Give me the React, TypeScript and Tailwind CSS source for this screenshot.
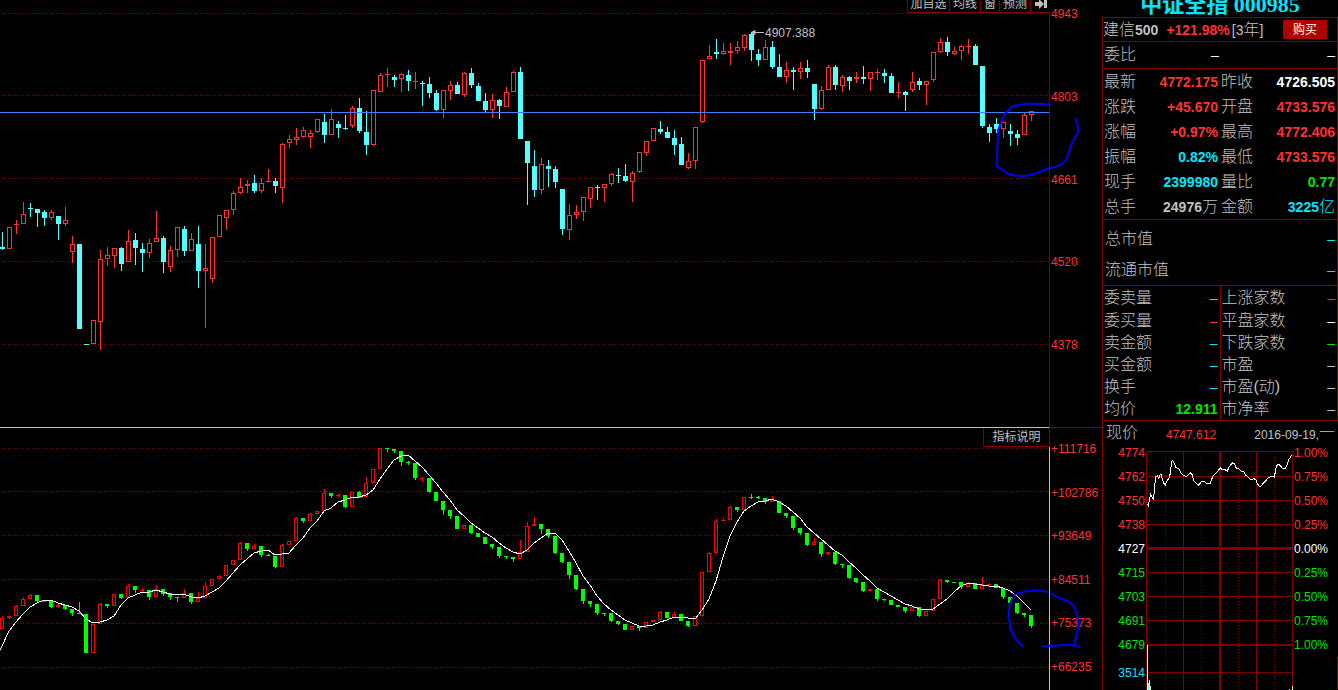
import React from "react";

// [rising, high, body top, body bottom, low]
type Bar = [number, number, number, number, number];

const STEP = 7;

const priceBars: Bar[] = [
  [0, 232, 247, 249, 250], [1, 227, 227, 249, 249], [1, 220, 224, 225, 234], [1, 202, 214, 224, 224],
  [0, 203, 208, 209, 217], [0, 209, 209, 213, 227], [0, 210, 212, 218, 226], [1, 210, 212, 218, 220],
  [0, 216, 216, 224, 240], [1, 207, 220, 224, 226], [1, 236, 244, 252, 263], [0, 244, 244, 329, 329],
  [0, 344, 344, 345, 345], [1, 320, 320, 344, 344], [1, 250, 259, 322, 350], [1, 247, 255, 259, 266],
  [1, 248, 248, 256, 268], [0, 247, 248, 264, 271], [1, 230, 241, 262, 262], [0, 233, 240, 248, 265],
  [0, 243, 249, 253, 272], [1, 239, 243, 253, 258], [1, 211, 238, 242, 242], [0, 236, 238, 262, 273],
  [1, 246, 250, 267, 272], [1, 227, 227, 250, 257], [0, 226, 229, 251, 256], [1, 233, 239, 251, 251],
  [0, 226, 244, 271, 288], [1, 244, 268, 271, 328], [1, 237, 237, 279, 283], [1, 215, 215, 237, 237],
  [1, 210, 210, 218, 230], [1, 191, 193, 210, 215], [1, 178, 187, 193, 194], [1, 180, 184, 186, 193],
  [0, 175, 183, 191, 193], [1, 178, 183, 191, 193], [1, 169, 181, 182, 182], [0, 178, 181, 186, 193],
  [1, 143, 144, 188, 203], [1, 135, 139, 143, 148], [1, 128, 137, 140, 145], [1, 127, 130, 137, 138],
  [1, 130, 133, 137, 148], [1, 119, 119, 132, 133], [0, 114, 122, 135, 143], [1, 109, 119, 135, 135],
  [0, 121, 124, 128, 138], [0, 115, 128, 129, 130], [1, 106, 108, 126, 128], [0, 98, 108, 131, 133],
  [0, 111, 132, 145, 155], [1, 90, 90, 145, 146], [1, 73, 75, 92, 92], [1, 68, 74, 75, 87],
  [0, 75, 77, 80, 87], [1, 73, 74, 79, 92], [0, 70, 75, 81, 91], [1, 72, 81, 82, 89],
  [0, 81, 83, 84, 106], [0, 77, 84, 93, 98], [0, 90, 93, 110, 111], [1, 90, 90, 110, 118],
  [1, 81, 85, 91, 100], [0, 82, 85, 94, 94], [1, 72, 73, 95, 97], [0, 68, 73, 85, 88],
  [0, 83, 86, 101, 101], [0, 93, 101, 110, 112], [1, 94, 100, 110, 118], [0, 99, 100, 106, 119],
  [1, 87, 92, 107, 107], [1, 71, 72, 92, 92], [0, 67, 72, 139, 139], [0, 141, 141, 163, 205],
  [0, 150, 166, 190, 197], [1, 158, 164, 190, 194], [0, 160, 166, 169, 187], [0, 166, 169, 182, 188],
  [0, 189, 189, 229, 235], [1, 204, 215, 230, 240], [1, 205, 212, 215, 219], [1, 197, 197, 212, 221],
  [1, 187, 187, 199, 208], [0, 185, 187, 188, 200], [1, 184, 184, 188, 202], [1, 173, 174, 184, 186],
  [0, 168, 175, 176, 183], [0, 164, 176, 181, 182], [1, 171, 173, 182, 202], [1, 152, 152, 172, 173],
  [1, 141, 141, 153, 156], [1, 128, 128, 141, 141], [0, 121, 129, 132, 134], [0, 127, 132, 138, 138],
  [0, 130, 138, 145, 155], [0, 137, 144, 165, 165], [1, 153, 161, 168, 169], [1, 127, 127, 161, 169],
  [1, 60, 60, 122, 123], [1, 45, 56, 59, 59], [0, 39, 52, 54, 59], [1, 43, 51, 54, 55],
  [1, 43, 51, 53, 65], [1, 41, 47, 51, 54], [1, 34, 35, 48, 51], [0, 32, 34, 50, 61],
  [0, 49, 54, 60, 66], [1, 40, 47, 60, 60], [0, 41, 47, 67, 69], [0, 54, 67, 77, 77],
  [1, 62, 70, 77, 83], [0, 67, 70, 72, 90], [1, 62, 68, 72, 79], [0, 60, 68, 72, 78],
  [0, 84, 84, 109, 120], [1, 86, 90, 109, 110], [1, 65, 67, 90, 90], [0, 65, 67, 85, 90],
  [1, 75, 77, 86, 92], [0, 76, 77, 81, 90], [1, 72, 77, 79, 83], [0, 66, 77, 79, 84],
  [1, 72, 72, 79, 91], [1, 69, 72, 73, 80], [0, 69, 73, 76, 83], [0, 73, 76, 93, 93],
  [1, 82, 92, 93, 98], [0, 91, 92, 95, 111], [1, 72, 82, 90, 92], [0, 78, 81, 85, 90],
  [1, 81, 81, 85, 105], [1, 52, 52, 80, 82], [1, 38, 42, 52, 53], [0, 37, 42, 52, 56],
  [1, 47, 51, 54, 55], [1, 45, 46, 51, 60], [1, 39, 46, 47, 54], [0, 44, 46, 65, 65],
  [0, 66, 66, 126, 128], [0, 124, 127, 133, 142], [0, 118, 124, 129, 133], [1, 122, 122, 129, 138],
  [0, 124, 131, 134, 146], [0, 130, 134, 138, 145], [1, 113, 115, 135, 135], [1, 111, 111, 115, 121],
];

const indicatorBars: Bar[] = [
  [1, 616, 618, 629, 629], [1, 616, 616, 618, 619], [1, 605, 606, 616, 616], [1, 597, 599, 606, 606],
  [1, 594, 595, 599, 599], [0, 595, 595, 601, 603], [1, 600, 600, 602, 602], [0, 601, 601, 607, 608],
  [1, 604, 605, 607, 608], [0, 605, 605, 609, 610], [0, 609, 609, 613, 616], [0, 602, 613, 614, 614],
  [0, 614, 614, 653, 653], [1, 624, 624, 653, 653], [1, 603, 604, 624, 624], [0, 604, 604, 606, 608],
  [1, 594, 594, 606, 606], [0, 594, 594, 598, 599], [1, 584, 586, 598, 598], [0, 586, 586, 590, 593],
  [1, 588, 590, 591, 593], [0, 590, 590, 597, 600], [1, 585, 589, 597, 597], [0, 589, 589, 594, 596],
  [0, 593, 593, 597, 600], [0, 597, 597, 598, 602], [1, 589, 593, 598, 598], [0, 593, 593, 602, 604],
  [1, 592, 598, 602, 602], [1, 582, 586, 598, 598], [1, 579, 579, 586, 586], [1, 575, 576, 579, 579],
  [1, 565, 565, 576, 576], [1, 560, 560, 565, 565], [1, 542, 543, 560, 560], [0, 543, 543, 549, 551],
  [1, 544, 546, 549, 549], [0, 546, 546, 555, 557], [0, 554, 555, 556, 556], [0, 556, 556, 567, 568],
  [1, 544, 545, 567, 567], [1, 541, 541, 545, 545], [1, 517, 518, 541, 541], [0, 518, 518, 521, 523],
  [1, 513, 514, 521, 521], [1, 511, 511, 514, 514], [1, 489, 493, 511, 511], [0, 493, 493, 496, 498],
  [1, 494, 495, 496, 497], [0, 495, 495, 507, 508], [1, 492, 492, 507, 507], [0, 491, 492, 498, 498],
  [1, 477, 483, 497, 497], [1, 469, 469, 483, 483], [1, 448, 448, 469, 469], [0, 448, 448, 449, 452],
  [0, 449, 449, 451, 453], [0, 451, 451, 462, 466], [0, 461, 462, 463, 465], [0, 463, 463, 478, 480],
  [1, 477, 478, 479, 482], [0, 478, 478, 492, 493], [0, 492, 492, 501, 501], [0, 501, 501, 510, 515],
  [0, 510, 510, 516, 519], [0, 516, 516, 529, 529], [1, 525, 525, 529, 529], [0, 525, 525, 533, 534],
  [0, 533, 533, 537, 537], [0, 537, 537, 544, 544], [0, 544, 544, 547, 549], [0, 547, 547, 556, 558],
  [0, 556, 556, 557, 559], [0, 557, 557, 559, 562], [1, 540, 552, 559, 559], [1, 522, 526, 552, 552],
  [1, 517, 524, 526, 526], [0, 524, 524, 529, 534], [0, 529, 529, 536, 538], [0, 536, 536, 553, 554],
  [0, 553, 553, 562, 563], [0, 562, 562, 575, 579], [0, 575, 575, 589, 590], [0, 589, 589, 601, 604],
  [0, 601, 601, 604, 607], [0, 604, 604, 613, 615], [0, 613, 613, 614, 616], [0, 613, 613, 621, 622],
  [0, 621, 621, 624, 625], [0, 624, 624, 630, 630], [1, 626, 626, 630, 630], [0, 626, 626, 628, 631],
  [1, 622, 622, 628, 628], [1, 620, 620, 622, 622], [1, 611, 612, 620, 620], [0, 612, 612, 618, 618],
  [1, 612, 614, 618, 618], [0, 614, 614, 621, 621], [0, 621, 621, 626, 627], [1, 616, 616, 626, 626],
  [1, 572, 572, 616, 616], [1, 552, 553, 572, 572], [1, 519, 521, 553, 553], [1, 518, 520, 521, 521],
  [1, 506, 507, 520, 520], [0, 507, 507, 510, 512], [1, 497, 497, 510, 510], [0, 494, 497, 498, 499],
  [0, 496, 497, 498, 499], [0, 498, 498, 502, 504], [1, 496, 499, 502, 502], [0, 501, 501, 513, 513],
  [0, 513, 513, 516, 518], [0, 516, 516, 528, 530], [0, 528, 528, 533, 535], [0, 533, 533, 545, 546],
  [1, 538, 542, 545, 545], [0, 542, 542, 554, 557], [1, 552, 552, 554, 555], [0, 552, 552, 564, 565],
  [0, 564, 564, 565, 568], [0, 565, 565, 578, 579], [0, 578, 578, 582, 583], [0, 582, 582, 591, 592],
  [1, 589, 589, 591, 591], [0, 589, 589, 599, 601], [0, 599, 599, 600, 601], [0, 600, 600, 605, 605],
  [0, 605, 605, 607, 607], [0, 607, 607, 611, 613], [1, 607, 607, 611, 611], [0, 607, 607, 616, 617],
  [1, 611, 611, 616, 616], [1, 599, 599, 611, 611], [1, 579, 580, 599, 599], [0, 580, 580, 582, 583],
  [0, 582, 582, 583, 583], [0, 582, 582, 587, 589], [1, 582, 583, 587, 587], [0, 583, 583, 589, 589],
  [1, 577, 584, 589, 589], [1, 583, 584, 585, 585], [0, 584, 584, 588, 588], [0, 588, 588, 597, 599],
  [0, 597, 597, 603, 603], [0, 603, 603, 613, 614], [0, 613, 613, 615, 617], [0, 615, 615, 626, 628],
];

const movingAverage = [
  646, 631, 622, 614, 607, 603, 600, 600, 603, 605, 607, 611, 619, 623, 622, 620, 616, 605, 598, 595,
  592, 592, 590, 592, 594, 595, 594, 597, 598, 596, 592, 588, 581, 573, 565, 559, 553, 551, 550, 555,
  554, 553, 545, 538, 528, 521, 511, 508, 502, 500, 497, 497, 495, 490, 479, 469, 460, 456, 455, 461,
  467, 475, 483, 492, 500, 510, 516, 523, 528, 533, 537, 543, 548, 552, 554, 550, 543, 538, 533, 533,
  540, 551, 563, 576, 585, 596, 604, 610, 615, 620, 623, 626, 626, 625, 622, 620, 617, 617, 618, 619,
  610, 599, 581, 557, 536, 522, 511, 506, 502, 501, 499, 502, 506, 512, 518, 527, 533, 539, 545, 551,
  555, 562, 568, 575, 581, 588, 592, 596, 600, 604, 606, 609, 610, 609, 604, 599, 592, 586, 583, 584,
  585, 586, 586, 588, 591, 596, 603, 610,
];

const intraday =
  "142,252 145,257 148,240 152,224 156,232 160,236 163,215 165,190 167,170 172,167 176,175 180,165 184,163 187,178 191,190 196,195 200,184 207,175 211,160 215,125 218,121 223,130 227,142 236,146 242,158 248,165 260,170 271,158 277,165 281,182 289,190 297,196 303,186 313,184 318,189 331,189 338,170 346,160 355,152 361,142 366,150 375,149 382,153 388,140 398,128 404,132 407,143 415,146 423,153 431,154 437,166 445,171 453,180 460,176 467,178 471,189 480,202 488,192 496,184 503,174 514,170 523,171 529,140 534,132 542,138 547,146 556,145 562,132 567,118 576,104";

const RED = "text-[#ff3232]";
const CYAN = "text-[#00e6ff]";
const GREEN = "text-[#00e600]";
const WHITE = "text-white";
const GRAY = "text-[#c0c0c0]";

type Cell = { label: string; value: string; unit?: string; color: string };

const quotes: [Cell, Cell][] = [
  [{ label: "最新", value: "4772.175", color: RED }, { label: "昨收", value: "4726.505", color: WHITE }],
  [{ label: "涨跌", value: "+45.670", color: RED }, { label: "开盘", value: "4733.576", color: RED }],
  [{ label: "涨幅", value: "+0.97%", color: RED }, { label: "最高", value: "4772.406", color: RED }],
  [{ label: "振幅", value: "0.82%", color: CYAN }, { label: "最低", value: "4733.576", color: RED }],
  [{ label: "现手", value: "2399980", color: CYAN }, { label: "量比", value: "0.77", color: GREEN }],
  [
    { label: "总手", value: "24976", unit: "万", color: GRAY },
    { label: "金额", value: "3225", unit: "亿", color: CYAN },
  ],
];

const breadth: [Cell, Cell][] = [
  [{ label: "委卖量", value: "–", color: CYAN }, { label: "上涨家数", value: "–", color: RED }],
  [{ label: "委买量", value: "–", color: RED }, { label: "平盘家数", value: "–", color: WHITE }],
  [{ label: "卖金额", value: "–", color: CYAN }, { label: "下跌家数", value: "–", color: GREEN }],
  [{ label: "买金额", value: "–", color: CYAN }, { label: "市盈", value: "–", color: GRAY }],
  [{ label: "换手", value: "–", color: CYAN }, { label: "市盈(动)", value: "–", color: GRAY }],
  [{ label: "均价", value: "12.911", color: GREEN }, { label: "市净率", value: "–", color: GRAY }],
];

const miniLeft = [
  ["4774", RED], ["4762", RED], ["4750", RED], ["4738", RED], ["4727", WHITE],
  ["4715", GREEN], ["4703", GREEN], ["4691", GREEN], ["4679", GREEN],
];

const miniRight = [
  ["1.00%", RED], ["0.75%", RED], ["0.50%", RED], ["0.25%", RED], ["0.00%", WHITE],
  ["0.25%", GREEN], ["0.50%", GREEN], ["0.75%", GREEN], ["1.00%", GREEN],
];

function Candles({ bars, width, up, down }: { bars: Bar[]; width: number; up: string; down: string }) {
  return (
    <g shapeRendering="crispEdges">
      {bars.map(([rising, high, top, bottom, low], i) => {
        const x = 2 + i * STEP;
        const color = rising ? up : down;
        const hollow = rising === 1 && bottom - top > 2;
        return (
          <g key={i}>
            <rect x={x} y={high} width={1} height={low - high} fill={color} />
            <rect x={x - 2} y={top} width={width} height={bottom - top} fill={color} />
            {hollow && (
              <rect x={x - 1} y={top + 1} width={width - 2} height={bottom - top - 2} fill="#000" />
            )}
          </g>
        );
      })}
    </g>
  );
}

function GridLines({ rows }: { rows: number[] }) {
  return (
    <g stroke="#800000" strokeDasharray="1 2" shapeRendering="crispEdges">
      {rows.map((y) => (
        <line key={y} x1="2" x2="1049" y1={y + 0.5} y2={y + 0.5} />
      ))}
    </g>
  );
}

function PairTable({ rows, split }: { rows: [Cell, Cell][]; split?: boolean }) {
  const labelCol = split ? "w-[68px]" : "w-[36px]";
  const rowHeight = split ? "h-[22px] first:h-6" : "h-[25px]";
  return (
    <table className="w-full table-fixed border-collapse leading-none whitespace-nowrap">
      <colgroup>
        <col className={labelCol} />
        <col />
        <col className={labelCol} />
        <col />
      </colgroup>
      <tbody>
        {rows.map((pair) => (
          <tr key={pair[0].label} className={rowHeight}>
            {pair.map((cell, i) => (
              <React.Fragment key={cell.label}>
                <th
                  scope="row"
                  className={`p-0 pl-px text-left text-base leading-none font-light ${
                    split && i === 1 ? "border-l border-[#800000]" : ""
                  }`}
                >
                  {cell.label}
                </th>
                <td
                  className={`p-0 pr-0.5 text-right text-sm leading-none ${
                    cell.value === "–" ? "font-normal" : "font-bold"
                  } ${cell.color}`}
                >
                  {cell.value}
                  {cell.unit && <span className="text-base leading-none font-light">{cell.unit}</span>}
                </td>
              </React.Fragment>
            ))}
          </tr>
        ))}
      </tbody>
    </table>
  );
}

function PriceChart() {
  return (
    <section className="relative flex">
      <div className="min-w-0 flex-1 border-b border-[#c0c0c0]">
        <svg viewBox="0 0 1049 427" className="block h-auto w-full">
          <GridLines rows={[13, 95, 178, 261, 344]} />
          <Candles bars={priceBars} width={5} up="#ff3232" down="#54ffff" />
          <rect y="112" width="1049" height="1" fill="#4080ff" />
          <path d="M751 32.5h13M751 32.5l4-2v4z" stroke="#c0c0c0" fill="#c0c0c0" />
          <text x="765" y="37" fontSize="12" fill="#c0c0c0">
            4907.388
          </text>
        </svg>
      </div>
      <div className="flex w-[53px] flex-col justify-between border-b border-l border-[#800000] pt-[7px] pb-[75px] pl-px text-xs leading-[14px] text-[#ff3232]">
        <span>4943</span>
        <span>4803</span>
        <span>4661</span>
        <span>4520</span>
        <span>4378</span>
      </div>

      {/* Toolbar, tucked under the window's top edge */}
      <div className="absolute top-0 right-[52px] flex h-[13px] items-end border-b border-l border-[#800000] bg-black text-xs leading-4 whitespace-nowrap">
        <button className="h-4 w-[42px] border-r border-[#800000]">加自选</button>
        <button className="h-4 w-[31px] border-r border-[#800000]">均线</button>
        <button className="h-4 w-[19px] border-r border-[#800000]">窗</button>
        <button className="h-4 w-[31px] border-r border-[#800000]">预测</button>
        <button className="flex h-4 w-[19px] items-center justify-center" aria-label="右移">
          <svg viewBox="0 0 12 12" className="size-3" fill="#c0c0c0">
            <path d="M0 4h4V1l5 5-5 5V8H0zM9 1h3v9H9z" />
          </svg>
        </button>
      </div>
    </section>
  );
}

function IndicatorChart() {
  return (
    <section className="relative flex">
      <div className="min-w-0 flex-1">
        <svg viewBox="0 428 1049 262" className="block h-auto w-full">
          <GridLines rows={[448, 491, 535, 579, 623, 667]} />
          <Candles bars={indicatorBars} width={4} up="#ff0000" down="#00ff00" />
          <polyline
            points={movingAverage.map((y, i) => `${2 + i * STEP},${y}`).join(" ")}
            fill="none"
            stroke="#fff"
            shapeRendering="crispEdges"
          />
          <path d="M0 650.500L2 646" stroke="#fff" />
        </svg>
      </div>
      <div className="flex w-[53px] flex-col justify-between border-l border-[#c0c0c0] pt-[14px] pb-4 pl-px text-xs leading-[14px] text-[#ff3232]">
        <span>+111716</span>
        <span>+102786</span>
        <span>+93649</span>
        <span>+84511</span>
        <span>+75373</span>
        <span>+66235</span>
      </div>
      <button className="absolute top-0 right-[52px] h-[19px] w-[67px] border-x border-b border-[#800000] bg-black text-xs leading-none">
        指标说明
      </button>
    </section>
  );
}

function MiniChart() {
  return (
    <section className="grow border-l border-[#800000] text-xs">
      <div className="flex h-5 items-end px-[3px] leading-none whitespace-nowrap">
        <h2 className="mr-7 text-base leading-none font-light">现价</h2>
        <span className="text-[#ff3232]">4747.612</span>
        <span className="ml-auto flex items-end">
          2016-09-19,<span className="text-base leading-none font-light">一</span>
        </span>
      </div>
      <div className="flex leading-6">
        <div className="flex min-w-0 flex-1 flex-col text-right">
          {miniLeft.map(([text, color]) => (
            <span key={text} className={`h-6 pr-px ${color}`}>
              {text}
            </span>
          ))}
          <span className="h-8 pr-px leading-8 text-[#00e6ff]">3514</span>
        </div>
        <svg viewBox="138 63 441 747" className="h-[249px] w-[147px] shrink-0">
          <g stroke="#800000" strokeWidth="3" shapeRendering="crispEdges">
            {[94.5, 169.5, 241.5, 313.5, 457.5, 529.5, 601.5, 757.5].map((y) => (
              <line key={y} x1="138" x2="579" y1={y} y2={y} />
            ))}
            {[139.5, 250.5, 469.5, 577.5].map((x) => (
              <line key={x} x1={x} x2={x} y1="94" y2="810" />
            ))}
            {[196.5, 304.5, 415.5, 523.5].map((x) => (
              <line key={x} x1={x} x2={x} y1="102" y2="810" strokeDasharray="3 6" />
            ))}
            <line x1="138" x2="579" y1="385" y2="385" strokeWidth="9" />
            <line x1="138" x2="579" y1="675" y2="675" strokeWidth="6" />
            <line x1="360" x2="360" y1="94" y2="810" strokeWidth="6" />
          </g>
          <polyline
            points={intraday}
            fill="none"
            stroke="#fff"
            strokeWidth="3"
            shapeRendering="crispEdges"
          />
          <rect x="141" y="675" width="3" height="135" fill="#fff" />
          <rect x="144" y="789" width="3" height="21" fill="#54ffff" />
          <rect x="147" y="780" width="3" height="30" fill="#ffff80" />
          <rect x="150" y="798" width="3" height="12" fill="#ffff80" />
          <rect x="567" y="807" width="3" height="3" fill="#ffff80" />
          <rect x="576" y="798" width="3" height="12" fill="#ffff80" />
        </svg>
        <div className="flex w-[45px] flex-col pl-px">
          {miniRight.map(([text, color], i) => (
            <span key={i} className={`h-6 ${color}`}>
              {text}
            </span>
          ))}
          <div className="h-8 border-r border-[#800000]" />
        </div>
      </div>
    </section>
  );
}

export default function App() {
  return (
    <div className="flex min-h-screen overflow-hidden bg-black font-['Liberation_Sans','Noto_Sans_CJK_SC',sans-serif] text-[#c0c0c0]">
      <main className="relative min-w-0 flex-1">
        <PriceChart />
        <IndicatorChart />
        {/* Pen marks over both charts */}
        <svg
          viewBox="0 0 1102 690"
          className="pointer-events-none absolute top-0 left-0 h-auto w-full"
          fill="none"
          stroke="#0000f0"
          strokeWidth="2"
          strokeLinecap="round"
          strokeLinejoin="round"
        >
          <path d="M1050 104.500L1028 103.500 1013 106C1008 110 1004 115 1003 118C1000 124 998 128 998 134L996.500 166C1000 169 1005 171 1008 174C1014 176 1026 177 1034 174L1047 169 1057 166.500C1062 164 1066 161 1067 158L1072 143 1078 132C1078.500 127 1077 122 1075.500 118.500" />
          <path d="M1047 592Q1035 589 1023 592Q1016 593 1014 596Q1008 604 1008.500 619L1010 622V629Q1016 641 1023 646.500" />
          <path d="M1051 593.500Q1057 598 1068 601Q1075 606 1077 614Q1080 628 1075 640V645M1042 646.500Q1055 646 1063 645H1072L1079 646.500" />
        </svg>
      </main>

      <aside className="flex w-[236px] shrink-0 flex-col">
        <h1 className="flex h-[17px] items-end justify-center font-['Liberation_Serif','Noto_Sans_CJK_SC',serif] text-[22px] leading-[25px] font-bold whitespace-nowrap text-[#00e6ff]">
          中证全指 000985
        </h1>

        <div className="border border-[#800000]">
          <div className="flex h-[23px] items-center pr-2.5 text-sm leading-none whitespace-nowrap">
            <span className="text-base leading-none font-light">建信</span>
            <b>500</b>
            <b className="ml-2 text-[#ff3232]">+121.98%</b>
            <span className="ml-0.5">
              [3<span className="text-base leading-none font-light">年</span>]
            </span>
            <button className="ml-auto h-[19px] w-11 bg-[#b00000] text-xs leading-none text-white">
              购买
            </button>
          </div>
          <div className="flex h-[27px] items-center border-t border-[#800000] pl-px text-sm leading-none">
            <span className="w-[107px] text-base leading-none font-light">委比</span>
            <span className="text-white">–</span>
            <span className="flex-1 pr-0.5 text-right text-white">–</span>
          </div>
          <div className="border-t border-[#800000]">
            <PairTable rows={quotes} />
          </div>
          <div className="border-t border-[#800000] pt-[3px] pr-0.5 pl-0.5 text-sm">
            <div className="flex h-[31px] items-center justify-between">
              <span className="text-base leading-none font-light">总市值</span>
              <span className="text-[#00e6ff]">–</span>
            </div>
            <div className="flex h-[31px] items-center justify-between">
              <span className="text-base leading-none font-light">流通市值</span>
              <span className="text-[#00e6ff]">–</span>
            </div>
          </div>
          <div className="border-t border-[#800000]">
            <PairTable rows={breadth} split />
          </div>
        </div>

        <MiniChart />
      </aside>
    </div>
  );
}
